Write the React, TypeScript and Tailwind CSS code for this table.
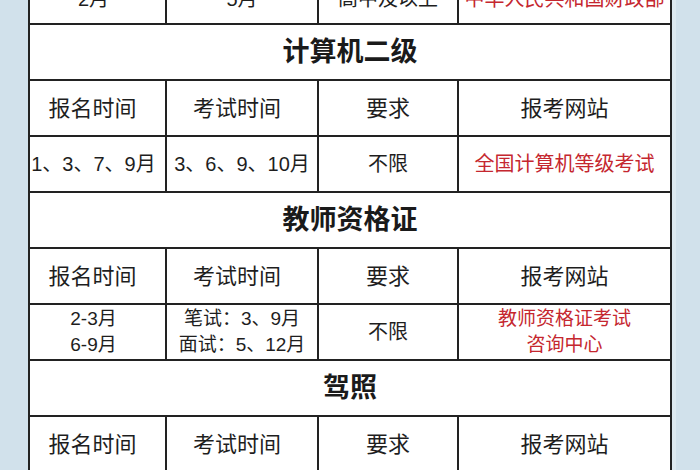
import React from 'react';

const font = { fontFamily: '"Liberation Sans", "Noto Sans CJK SC", sans-serif' };

type Cell = { lines: string[]; red?: boolean; small?: boolean };

function Row({ cells, header, first }: { cells: Cell[]; header?: boolean; first?: boolean }) {
  return (
    <div className="grid grid-cols-[137px_152px_140px_1fr] h-[56px] border-b-2 border-[#222]">
      {cells.map((c, i) => (
        <div
          key={i}
          className={`flex flex-col items-center justify-center text-center ${i < 3 ? 'border-r-2 border-[#222]' : ''} ${
            c.red ? 'text-[#c5272f]' : 'text-[#1e1e1e]'
          } ${header ? 'text-[22px]' : c.small ? 'text-[19px] leading-[26px]' : 'text-[20px]'} ${
            header && i < 2 ? 'pr-[10px]' : ''
          } ${!header && i === 0 ? 'pr-[8px]' : ''} ${first ? 'pt-[5px]' : ''}`}
        >
          {c.lines.map((l, j) => (
            <span key={j} className="whitespace-nowrap">{l}</span>
          ))}
        </div>
      ))}
    </div>
  );
}

function Heading({ title }: { title: string }) {
  return (
    <div className="h-[56px] border-b-2 border-[#222] flex items-center justify-center text-[27px] font-bold text-[#1a1a1a]">
      {title}
    </div>
  );
}

const headerCells: Cell[] = [
  { lines: ['报名时间'] },
  { lines: ['考试时间'] },
  { lines: ['要求'] },
  { lines: ['报考网站'] },
];

export default function App() {
  return (
    <div className="w-[700px] h-[470px] overflow-hidden bg-[#d1e1eb] flex" style={font}>
      <div className="ml-[28px] w-[644px] h-[470px] overflow-hidden">
        <div className="-mt-[31px] bg-white border-x-2 border-[#222]">
          <Row
            first
            cells={[
              { lines: ['2月'] },
              { lines: ['5月'] },
              { lines: ['高中及以上'] },
              { lines: ['中华人民共和国财政部'], red: true },
            ]}
          />
          <Heading title="计算机二级" />
          <Row cells={headerCells} header />
          <Row
            cells={[
              { lines: ['1、3、7、9月'] },
              { lines: ['3、6、9、10月'] },
              { lines: ['不限'] },
              { lines: ['全国计算机等级考试'], red: true },
            ]}
          />
          <Heading title="教师资格证" />
          <Row cells={headerCells} header />
          <Row
            cells={[
              { lines: ['2-3月', '6-9月'], small: true },
              { lines: ['笔试：3、9月', '面试：5、12月'], small: true },
              { lines: ['不限'] },
              { lines: ['教师资格证考试', '咨询中心'], red: true, small: true },
            ]}
          />
          <Heading title="驾照" />
          <Row cells={headerCells} header />
          <Row cells={[{ lines: [''] }, { lines: [''] }, { lines: [''] }, { lines: [''] }]} />
        </div>
      </div>
      <div className="w-[4px] h-[470px] bg-[#dde9f0]" />
    </div>
  );
}
